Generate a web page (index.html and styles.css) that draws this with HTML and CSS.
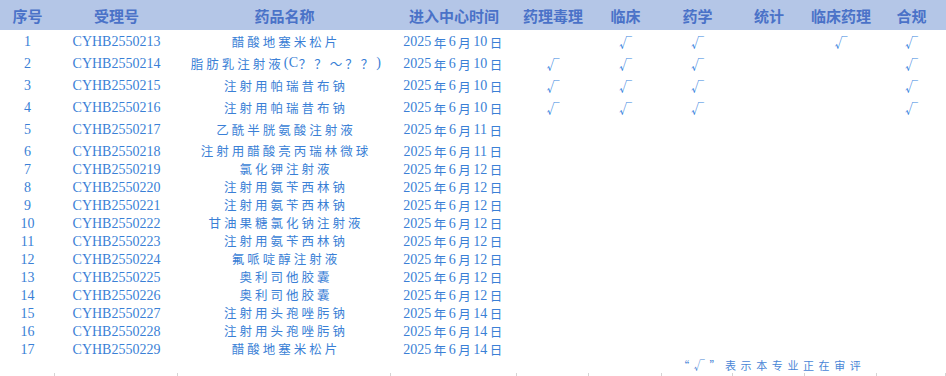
FILE: index.html
```html
<!DOCTYPE html>
<html lang="zh-CN">
<head>
<meta charset="utf-8">
<title>审评进度</title>
<link rel="stylesheet" href="styles.css">
</head>
<body>
<div class="sheet">
  <div class="row head">
    <div class="cell">序号</div><div class="cell">受理号</div><div class="cell">药品名称</div><div class="cell">进入中心时间</div>
    <div class="cell">药理毒理</div><div class="cell">临床</div><div class="cell">药学</div><div class="cell">统计</div><div class="cell">临床药理</div><div class="cell">合规</div>
  </div>

  <div class="row tall">
    <div class="cell num">1</div><div class="cell num">CYHB2550213</div><div class="cell name">醋酸地塞米松片</div><div class="cell num">2025<span class="cj">年</span>6<span class="cj">月</span>10<span class="cj">日</span></div>
    <div class="cell chk"></div><div class="cell chk">√</div><div class="cell chk">√</div><div class="cell chk"></div><div class="cell chk">√</div><div class="cell chk">√</div>
  </div>
  <div class="row tall">
    <div class="cell num">2</div><div class="cell num">CYHB2550214</div><div class="cell name">脂肪乳注射液<span class="lat">(C</span>？？～？？<span class="lat">)</span></div><div class="cell num">2025<span class="cj">年</span>6<span class="cj">月</span>10<span class="cj">日</span></div>
    <div class="cell chk">√</div><div class="cell chk">√</div><div class="cell chk">√</div><div class="cell chk"></div><div class="cell chk"></div><div class="cell chk">√</div>
  </div>
  <div class="row tall">
    <div class="cell num">3</div><div class="cell num">CYHB2550215</div><div class="cell name">注射用帕瑞昔布钠</div><div class="cell num">2025<span class="cj">年</span>6<span class="cj">月</span>10<span class="cj">日</span></div>
    <div class="cell chk">√</div><div class="cell chk">√</div><div class="cell chk">√</div><div class="cell chk"></div><div class="cell chk"></div><div class="cell chk">√</div>
  </div>
  <div class="row tall">
    <div class="cell num">4</div><div class="cell num">CYHB2550216</div><div class="cell name">注射用帕瑞昔布钠</div><div class="cell num">2025<span class="cj">年</span>6<span class="cj">月</span>10<span class="cj">日</span></div>
    <div class="cell chk">√</div><div class="cell chk">√</div><div class="cell chk">√</div><div class="cell chk"></div><div class="cell chk"></div><div class="cell chk">√</div>
  </div>
  <div class="row tall">
    <div class="cell num">5</div><div class="cell num">CYHB2550217</div><div class="cell name">乙酰半胱氨酸注射液</div><div class="cell num">2025<span class="cj">年</span>6<span class="cj">月</span>11<span class="cj">日</span></div>
  </div>
  <div class="row">
    <div class="cell num">6</div><div class="cell num">CYHB2550218</div><div class="cell name">注射用醋酸亮丙瑞林微球</div><div class="cell num">2025<span class="cj">年</span>6<span class="cj">月</span>11<span class="cj">日</span></div>
  </div>
  <div class="row">
    <div class="cell num">7</div><div class="cell num">CYHB2550219</div><div class="cell name">氯化钾注射液</div><div class="cell num">2025<span class="cj">年</span>6<span class="cj">月</span>12<span class="cj">日</span></div>
  </div>
  <div class="row">
    <div class="cell num">8</div><div class="cell num">CYHB2550220</div><div class="cell name">注射用氨苄西林钠</div><div class="cell num">2025<span class="cj">年</span>6<span class="cj">月</span>12<span class="cj">日</span></div>
  </div>
  <div class="row">
    <div class="cell num">9</div><div class="cell num">CYHB2550221</div><div class="cell name">注射用氨苄西林钠</div><div class="cell num">2025<span class="cj">年</span>6<span class="cj">月</span>12<span class="cj">日</span></div>
  </div>
  <div class="row">
    <div class="cell num">10</div><div class="cell num">CYHB2550222</div><div class="cell name">甘油果糖氯化钠注射液</div><div class="cell num">2025<span class="cj">年</span>6<span class="cj">月</span>12<span class="cj">日</span></div>
  </div>
  <div class="row">
    <div class="cell num">11</div><div class="cell num">CYHB2550223</div><div class="cell name">注射用氨苄西林钠</div><div class="cell num">2025<span class="cj">年</span>6<span class="cj">月</span>12<span class="cj">日</span></div>
  </div>
  <div class="row">
    <div class="cell num">12</div><div class="cell num">CYHB2550224</div><div class="cell name">氟哌啶醇注射液</div><div class="cell num">2025<span class="cj">年</span>6<span class="cj">月</span>12<span class="cj">日</span></div>
  </div>
  <div class="row">
    <div class="cell num">13</div><div class="cell num">CYHB2550225</div><div class="cell name">奥利司他胶囊</div><div class="cell num">2025<span class="cj">年</span>6<span class="cj">月</span>12<span class="cj">日</span></div>
  </div>
  <div class="row">
    <div class="cell num">14</div><div class="cell num">CYHB2550226</div><div class="cell name">奥利司他胶囊</div><div class="cell num">2025<span class="cj">年</span>6<span class="cj">月</span>12<span class="cj">日</span></div>
  </div>
  <div class="row">
    <div class="cell num">15</div><div class="cell num">CYHB2550227</div><div class="cell name">注射用头孢唑肟钠</div><div class="cell num">2025<span class="cj">年</span>6<span class="cj">月</span>14<span class="cj">日</span></div>
  </div>
  <div class="row">
    <div class="cell num">16</div><div class="cell num">CYHB2550228</div><div class="cell name">注射用头孢唑肟钠</div><div class="cell num">2025<span class="cj">年</span>6<span class="cj">月</span>14<span class="cj">日</span></div>
  </div>
  <div class="row">
    <div class="cell num">17</div><div class="cell num">CYHB2550229</div><div class="cell name">醋酸地塞米松片</div><div class="cell num">2025<span class="cj">年</span>6<span class="cj">月</span>14<span class="cj">日</span></div>
  </div>

  <div class="row note-row">
    <div class="cell note">“√”表示本专业正在审评</div>
  </div>

  <div class="row ticks">
    <div class="tick"></div><div class="tick"></div><div class="tick"></div><div class="tick"></div><div class="tick"></div>
    <div class="tick"></div><div class="tick"></div><div class="tick"></div><div class="tick"></div><div class="tick"></div>
  </div>
</div>
</body>
</html>
```

FILE: styles.css
```css
html, body {
  margin: 0;
  padding: 0;
  background: #ffffff;
}

.sheet {
  width: 946px;
  font-family: "Liberation Serif", "Noto Sans CJK SC", serif;
  color: #3a7fd6;
}

.row {
  display: grid;
  grid-template-columns: 55px 123px 213px 126px 72px 73px 71px 72px 72px 69px;
  height: 18px;
}

.row.head {
  height: 30px;
  background: #b4c6e7;
  color: #4a72c8;
  font-family: "Noto Sans CJK SC", sans-serif;
  font-weight: 700;
  font-size: 15px;
}

.row.tall {
  height: 22px;
}

.cell {
  display: flex;
  align-items: center;
  justify-content: center;
  white-space: nowrap;
  overflow: visible;
}

.num {
  font-size: 14px;
  letter-spacing: 0;
  padding-top: 2px;
}

.cj {
  font-family: "Noto Sans CJK SC", sans-serif;
  font-size: 12.5px;
  padding: 0 2.5px;
}

.name {
  font-family: "Noto Sans CJK SC", "Liberation Serif", sans-serif;
  font-size: 12.5px;
  letter-spacing: 3px;
  padding-left: 3px;
}

.lat {
  font-family: "Liberation Serif", serif;
  font-size: 14px;
  letter-spacing: 0.5px;
}

.chk {
  font-family: "Noto Sans CJK SC", sans-serif;
  font-size: 13px;
  color: #3a86e0;
}

.note-row {
  height: 17px;
}

.note {
  grid-column: 7 / 10;
  font-family: "Noto Sans CJK SC", sans-serif;
  font-size: 11px;
  letter-spacing: 4.6px;
  padding-left: 4.6px;
  color: #4a86d6;
}

.row.ticks {
  height: 3px;
}

.tick {
  border-right: 1px solid #d4d4d4;
}
```
